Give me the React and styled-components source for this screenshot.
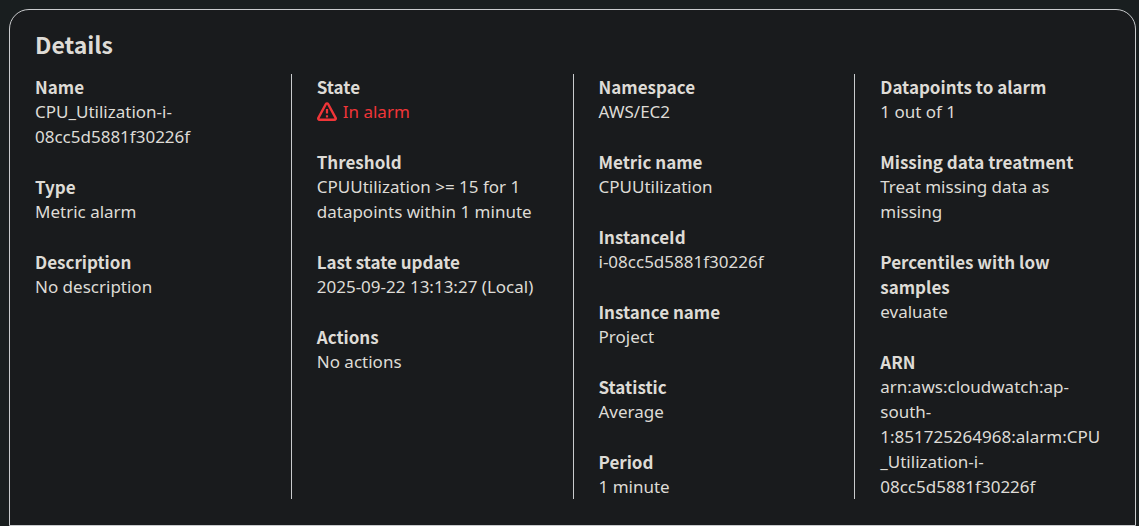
import React from "react";
import styled, { createGlobalStyle } from "styled-components";

const GlobalStyle = createGlobalStyle`
  *, *::before, *::after { box-sizing: border-box; }
  body {
    margin: 0;
    background: #191e1f;
    color: #dedbd6;
    font-family: "Noto Sans", "Open Sans", sans-serif;
    font-size: 17px;
    line-height: 25px;
  }
`;

const headingFont = `"Noto Sans CJK SC", "Noto Sans", sans-serif`;

const Page = styled.main`
  padding: 9px 3px 0 9px;
`;

const Card = styled.section`
  padding: 20px 25px 26px;
  border: 1px solid #c9cbcd;
  border-radius: 20px 20px 0 0;
  background: #191b1d;
`;

const Title = styled.h2`
  margin: 0 0 16px;
  font-family: ${headingFont};
  font-size: 23px;
  line-height: 28px;
  font-weight: 700;
`;

const Columns = styled.div`
  display: grid;
  grid-template-columns: repeat(4, minmax(0, 1fr));
  column-gap: 52px;
`;

const Column = styled.dl`
  display: flex;
  flex-direction: column;
  gap: 25px;
  margin: 0;

  & + & {
    margin-left: -26px;
    padding-left: 25px;
    border-left: 1px solid #c9cbcd;
  }
`;

const Label = styled.dt`
  font-family: ${headingFont};
  font-weight: 700;
`;

const Value = styled.dd`
  margin: 0;
  overflow-wrap: anywhere;
`;

const Status = styled.span`
  display: flex;
  align-items: center;
  gap: 6px;
  color: #f03538;
`;

const AlarmIcon = () => (
  <svg width="20" height="20" viewBox="0 0 20 20" fill="none" stroke="currentColor" strokeWidth="2.4" strokeLinejoin="round" aria-hidden="true">
    <path d="M8.9 2 1.400 15.900c-.5.9.1 1.900 1.100 1.900h15c1 0 1.600-1 1.100-1.900L11.100 2c-.5-.9-1.700-.9-2.200 0Z" />
    <path d="M10 7v4.600M10 13.200v2.300" strokeWidth="2.200" />
  </svg>
);

const columns = [
  [
    ["Name", "CPU_Utilization-i-08cc5d5881f30226f"],
    ["Type", "Metric alarm"],
    ["Description", "No description"],
  ],
  [
    ["State", <Status><AlarmIcon />In alarm</Status>],
    ["Threshold", "CPUUtilization >= 15 for 1 datapoints within 1 minute"],
    ["Last state update", "2025-09-22 13:13:27 (Local)"],
    ["Actions", "No actions"],
  ],
  [
    ["Namespace", "AWS/EC2"],
    ["Metric name", "CPUUtilization"],
    ["InstanceId", "i-08cc5d5881f30226f"],
    ["Instance name", "Project"],
    ["Statistic", "Average"],
    ["Period", "1 minute"],
  ],
  [
    ["Datapoints to alarm", "1 out of 1"],
    ["Missing data treatment", "Treat missing data as missing"],
    ["Percentiles with low samples", "evaluate"],
    ["ARN", <>arn:aws:cloudwatch:ap-south-1:851725264968:alarm:CPU<wbr />_Utilization-i-08cc5d5881f30226f</>],
  ],
];

export default function App() {
  return (
    <>
      <GlobalStyle />
      <Page>
        <Card aria-labelledby="details-title">
          <Title id="details-title">Details</Title>
          <Columns>
            {columns.map((fields, index) => (
              <Column key={index}>
                {fields.map(([label, value]) => (
                  <div key={label}>
                    <Label>{label}</Label>
                    <Value>{value}</Value>
                  </div>
                ))}
              </Column>
            ))}
          </Columns>
        </Card>
      </Page>
    </>
  );
}
